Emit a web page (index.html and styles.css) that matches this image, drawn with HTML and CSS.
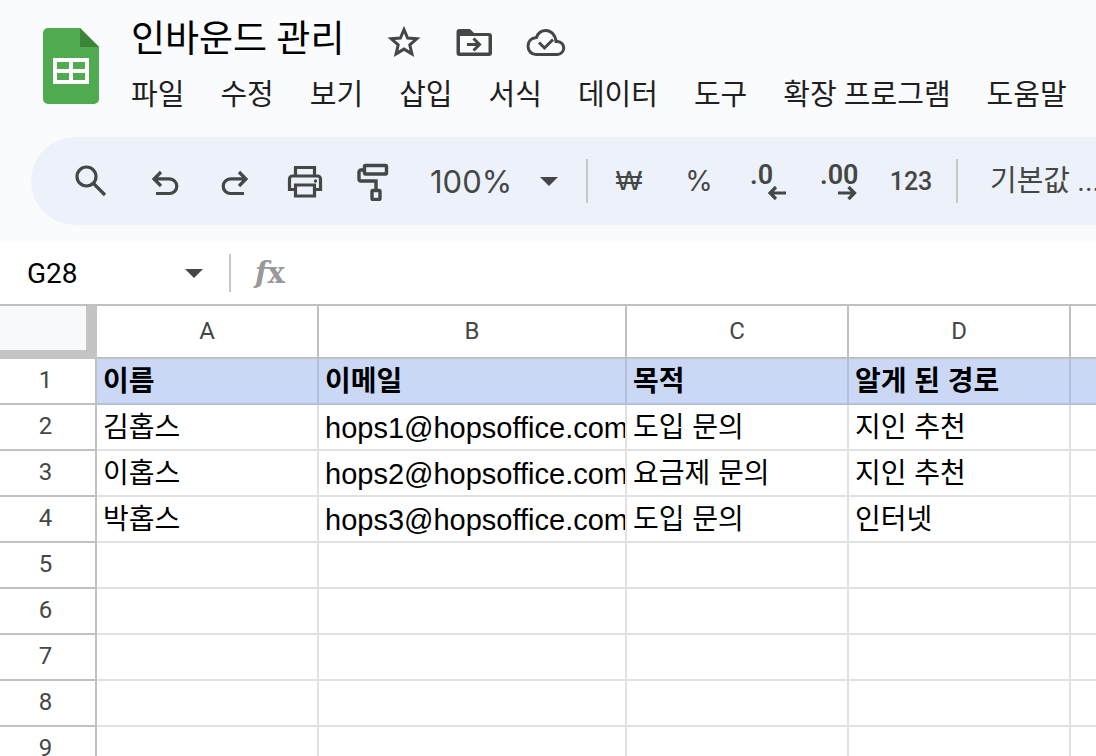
FILE: index.html
```html
<!DOCTYPE html>
<html lang="ko">
<head>
<meta charset="utf-8">
<meta name="viewport" content="width=device-width, initial-scale=1">
<title>인바운드 관리</title>
<link rel="stylesheet" href="styles.css">
</head>
<body>
<header class="header">
  <svg class="logo" viewBox="0 0 56 76" aria-hidden="true">
    <path fill="#50aa50" d="M5 0h32l19 19v52a5 5 0 0 1-5 5H5a5 5 0 0 1-5-5V5a5 5 0 0 1 5-5z"/>
    <path fill="#3d8339" d="M37 0l19 19H37z"/>
    <path fill="#fff" fill-rule="evenodd" d="M10 30h36v26H10zM14 34v7h12v-7zM30 34v7h12v-7zM14 45v7h12v-7zM30 45v7h12v-7z"/>
  </svg>
  <div class="heading">
    <div class="title-row">
      <h1 class="title">인바운드 관리</h1>
      <button class="title-button" type="button" aria-label="별표">
        <svg width="36" height="36" viewBox="0 0 36 36" fill="none" stroke="#444746" stroke-width="3"><path stroke-miterlimit="10" d="M18 5.500L21.600 14l9.200.8-7 6.100 2.100 9-7.900-4.800-7.900 4.800 2.100-9-7-6.100 9.200-.8z"/></svg>
      </button>
      <button class="title-button" type="button" aria-label="이동">
        <svg width="36" height="36" viewBox="0 0 36 36"><path fill="#444746" fill-rule="evenodd" d="M3.500 5H14l4 4h15a3 3 0 0 1 3 3v17a3 3 0 0 1-3 3H3.500a3 3 0 0 1-3-3V8a3 3 0 0 1 3-3zM4 12v16.500h28.500V12z"/><path fill="none" stroke="#444746" stroke-width="3" d="M11 20.500h12M17.500 14.500l6 6-6 6"/></svg>
      </button>
      <button class="title-button" type="button" aria-label="문서 상태">
        <svg width="40" height="36" viewBox="0 0 40 36" fill="none" stroke="#444746" stroke-width="3"><path d="M10 30.500h21a6.500 6.500 0 0 0 .5-13h-1.500C29.500 11 25 6.500 20 6.500c-4.500 0-8 2.500-9.500 7C5 14 2 17.500 2 22c0 5 3.500 8.500 8 8.500z"/><path d="M13 18.500l5.500 5.500 8.500-8.500"/></svg>
      </button>
    </div>
    <nav class="menu">
      <button type="button">파일</button>
      <button type="button">수정</button>
      <button type="button">보기</button>
      <button type="button">삽입</button>
      <button type="button">서식</button>
      <button type="button">데이터</button>
      <button type="button">도구</button>
      <button type="button">확장 프로그램</button>
      <button type="button">도움말</button>
    </nav>
  </div>
</header>

<div class="toolbar" role="toolbar">
  <button class="tool tool-search" type="button" aria-label="검색">
    <svg width="40" height="40" viewBox="0 0 40 40" fill="none" stroke="#444746" stroke-width="3.200"><circle cx="16.500" cy="15.500" r="9.500"/><path d="M23 22L35 34"/></svg>
  </button>
  <button class="tool" type="button" aria-label="실행취소">
    <svg width="40" height="40" viewBox="0 0 40 40" fill="none" stroke="#444746" stroke-width="3.200"><path d="M11 32.500h13.500a7.300 7.300 0 0 0 0-14.600H9.500M16 11l-7 7 7 7"/></svg>
  </button>
  <button class="tool" type="button" aria-label="재실행">
    <svg width="40" height="40" viewBox="0 0 40 40" fill="none" stroke="#444746" stroke-width="3.200"><path d="M29 32.500H15.500a7.300 7.300 0 0 1 0-14.600H30.500M24 11l7 7-7 7"/></svg>
  </button>
  <button class="tool" type="button" aria-label="인쇄">
    <svg width="40" height="40" viewBox="0 0 40 40" fill="none" stroke="#444746" stroke-width="3.200"><path d="M10.500 15V6.500h19V15M10.500 28.500h-6V18a3 3 0 0 1 3-3h25a3 3 0 0 1 3 3v10.500h-6M10.500 24h19v11h-19z"/><circle cx="30.500" cy="20" r="1.700" fill="#444746" stroke="none"/></svg>
  </button>
  <button class="tool" type="button" aria-label="서식 복사">
    <svg width="40" height="40" viewBox="0 0 40 40" fill="none" stroke="#444746" stroke-width="3.400"><path d="M10 9H6a2 2 0 0 0-2 2v7a2 2 0 0 0 2 2h15v9"/><rect x="9.500" y="4.500" width="22" height="8.500" rx="1"/><rect x="17" y="29.500" width="8" height="9" rx="1"/></svg>
  </button>
  <button class="zoom" type="button">100% <span class="caret"></span></button>
  <span class="divider"></span>
  <button class="tool currency" type="button">₩</button>
  <button class="tool percent" type="button">%</button>
  <button class="tool" type="button" aria-label="소수점 이하 자릿수 감소">
    <svg width="40" height="44" viewBox="0 0 40 44"><text class="decimal" x="1" y="25">.0</text><path fill="none" stroke="#444746" stroke-width="3.200" d="M37 34H21.500M27 28l-6 6 6 6"/></svg>
  </button>
  <button class="tool" type="button" aria-label="소수점 이하 자릿수 증가">
    <svg width="40" height="44" viewBox="0 0 40 44"><text class="decimal" x="1" y="25">.00</text><path fill="none" stroke="#444746" stroke-width="3.200" d="M19 34h16M29.500 28l6 6-6 6"/></svg>
  </button>
  <button class="tool number-format" type="button">123</button>
  <span class="divider"></span>
  <button class="font-name" type="button">기본값 ...</button>
</div>

<div class="formula-bar">
  <input class="name-box" type="text" value="G28" aria-label="이름 상자">
  <button class="name-menu" type="button" aria-label="이름 목록"><span class="caret"></span></button>
  <span class="divider"></span>
  <svg class="fx" width="38" height="40" viewBox="0 0 38 40" aria-hidden="true"><text x="4" y="30"><tspan class="fx-f">f</tspan><tspan>x</tspan></text></svg>
  <input class="formula" type="text" aria-label="수식">
</div>

<main class="sheet">
  <table class="grid">
    <colgroup><col class="col-index"><col class="col-normal"><col class="col-wide"><col class="col-normal"><col class="col-normal"><col></colgroup>
    <thead>
      <tr><td class="corner"></td><th scope="col">A</th><th scope="col">B</th><th scope="col">C</th><th scope="col">D</th><th scope="col"></th></tr>
    </thead>
    <tbody>
      <tr class="labels"><th scope="row">1</th><td>이름</td><td>이메일</td><td>목적</td><td>알게 된 경로</td><td></td></tr>
      <tr><th scope="row">2</th><td>김홉스</td><td class="mail">hops1@hopsoffice.com</td><td>도입 문의</td><td>지인 추천</td><td></td></tr>
      <tr><th scope="row">3</th><td>이홉스</td><td class="mail">hops2@hopsoffice.com</td><td>요금제 문의</td><td>지인 추천</td><td></td></tr>
      <tr><th scope="row">4</th><td>박홉스</td><td class="mail">hops3@hopsoffice.com</td><td>도입 문의</td><td>인터넷</td><td></td></tr>
      <tr><th scope="row">5</th><td></td><td></td><td></td><td></td><td></td></tr>
      <tr><th scope="row">6</th><td></td><td></td><td></td><td></td><td></td></tr>
      <tr><th scope="row">7</th><td></td><td></td><td></td><td></td><td></td></tr>
      <tr><th scope="row">8</th><td></td><td></td><td></td><td></td><td></td></tr>
      <tr><th scope="row">9</th><td></td><td></td><td></td><td></td><td></td></tr>
    </tbody>
  </table>
</main>
</body>
</html>
```
FILE: styles.css
```css
* {
  box-sizing: border-box;
}

body {
  margin: 0;
  height: 100vh;
  overflow: hidden;
  display: flex;
  flex-direction: column;
  background: #f9fbfd;
  color: #000;
  font-family: Roboto, "Noto Sans CJK KR", sans-serif;
}

button,
input {
  margin: 0;
  padding: 0;
  border: 0;
  background: none;
  font: inherit;
  color: inherit;
}

button {
  flex: none;
  white-space: nowrap;
}

svg {
  display: block;
  flex: none;
}

.header {
  flex: none;
  display: flex;
  align-items: flex-start;
  gap: 32px;
  padding: 16px 0 0 43px;
  height: 137px;
}

.logo {
  width: 56px;
  height: 76px;
  margin-top: 12px;
}

.title-row {
  display: flex;
  align-items: center;
  height: 48px;
}

.title {
  margin: 0 42px 0 0;
  font-size: 37px;
  font-weight: 400;
  line-height: 48px;
  white-space: nowrap;
}

.title-button {
  margin: 4px 34px 0 0;
}

.menu {
  display: flex;
  gap: 36px;
  margin-top: 11px;
  color: #1f1f1f;
  font-size: 29px;
  line-height: 40px;
}

.toolbar {
  flex: none;
  display: flex;
  align-items: center;
  height: 88px;
  margin-left: 31px;
  padding-left: 24px;
  overflow: hidden;
  border-radius: 44px 0 0 44px;
  background: #edf2fa;
  color: #444746;
}

.tool {
  display: flex;
  align-items: center;
  justify-content: center;
  width: 70px;
  height: 56px;
}

.tool-search {
  margin-right: 5px;
}

.currency {
  font-family: "Liberation Sans", sans-serif;
  font-size: 28px;
}

.percent {
  font-family: Inter, sans-serif;
  font-size: 28px;
}

.number-format {
  width: 74px;
  font-size: 25px;
  font-weight: 500;
}

.decimal {
  fill: #444746;
  font-family: Roboto, sans-serif;
  font-size: 27px;
  font-weight: 600;
}

.zoom {
  display: flex;
  align-items: center;
  justify-content: space-between;
  width: 168px;
  padding: 0 20px;
  font-family: Inter, sans-serif;
  font-size: 31px;
}

.caret {
  border: 9px solid transparent;
  border-top-color: #444746;
  border-bottom: 0;
}

.divider {
  flex: none;
  width: 2px;
  height: 44px;
  margin: 0 6px 0 8px;
  background: #c7c7c7;
}

.font-name {
  margin-left: 26px;
  padding-bottom: 6px;
  font-size: 29px;
}

.formula-bar {
  flex: none;
  display: flex;
  align-items: center;
  height: 64px;
  margin-top: 17px;
  padding-left: 27px;
  border-bottom: 2px solid #c0c0c0;
  background: #fff;
}

.name-box {
  width: 150px;
  font-size: 28px;
}

.name-menu {
  display: flex;
  justify-content: center;
  width: 34px;
}

.formula-bar .divider {
  height: 38px;
  margin: 0 20px 0 18px;
}

.fx {
  fill: #999;
  font-family: "DejaVu Serif", serif;
  font-size: 29px;
  font-weight: 700;
}

.fx-f {
  font-style: italic;
}

.formula {
  flex: 1;
  min-width: 0;
  font-size: 28px;
}

.sheet {
  flex: 1;
  min-height: 0;
  overflow: hidden;
  background: #fff;
}

.grid {
  width: 100%;
  table-layout: fixed;
  border-collapse: separate;
  border-spacing: 0;
  font-family: "Liberation Sans", "Noto Sans CJK KR", sans-serif;
  font-size: 28px;
  line-height: 40px;
}

.col-index {
  width: 97px;
}

.col-normal {
  width: 222px;
}

.col-wide {
  width: 308px;
}

.grid th,
.grid td {
  height: 46px;
  padding: 2px 0 0 6px;
  border: solid #e1e1e1;
  border-width: 0 2px 2px 0;
  overflow: hidden;
  white-space: nowrap;
}

.grid th {
  padding: 0 0 2px;
  border-color: #c0c0c0;
  color: #444746;
  font-family: Roboto, sans-serif;
  font-size: 24px;
  font-weight: 400;
}

.grid tbody th {
  padding-right: 4px;
}

.grid thead th {
  height: 53px;
}

.grid .corner {
  border-color: #c4c4c4;
  border-width: 0 11px 9px 0;
  background: #f8f9fa;
}

.grid .labels td {
  border-color: #b3c0dc;
  background: #cad8f5;
  font-weight: 700;
}

.grid th:last-child,
.grid td:last-child {
  border-right: 0;
}

.grid .mail {
  font-size: 29px;
}
```
